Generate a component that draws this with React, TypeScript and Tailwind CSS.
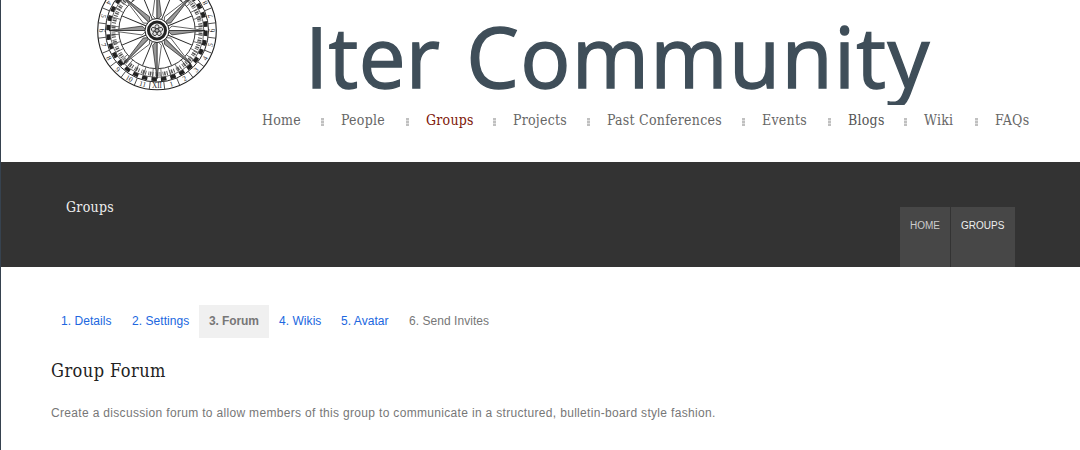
const SLAB = "font-['Roboto_Slab','DejaVu_Serif_Condensed','DejaVu_Serif',serif] [font-stretch:condensed]";

const NAV = [
  { label: 'Home', box: 'w-[79px]', color: 'text-[#666]' },
  { label: 'People', box: 'w-[85px]', color: 'text-[#666]' },
  { label: 'Groups', box: 'w-[87px]', color: 'text-[#7d1507]' },
  { label: 'Projects', box: 'w-[94px]', color: 'text-[#666]' },
  { label: 'Past Conferences', box: 'w-[155px]', color: 'text-[#666]' },
  { label: 'Events', box: 'w-[86px]', color: 'text-[#666]' },
  { label: 'Blogs', box: 'w-[76px]', color: 'text-[#555]' },
  { label: 'Wiki', box: 'w-[71px]', color: 'text-[#666]' },
  { label: 'FAQs', box: 'w-[60px]', color: 'text-[#666]' },
];

const STEPS = [
  { label: '1. Details', box: 'w-[71px] text-[#2067e0]' },
  { label: '2. Settings', box: 'w-[77px] text-[#2067e0]' },
  { label: '3. Forum', box: 'w-[70px] bg-[#f0f0f0] font-bold text-[#777] tracking-[-0.1px]' },
  { label: '4. Wikis', box: 'w-[62px] text-[#2067e0]' },
  { label: '5. Avatar', box: 'w-[68px] text-[#2067e0]' },
  { label: '6. Send Invites', box: 'w-[110px] text-[#777]' },
];

const range = (n: number) => Array.from({ length: n }, (_, i) => i);

function Ray({ angle }: { angle: number }) {
  return (
    <g transform={`rotate(${angle})`} strokeLinejoin="round">
      <path d="M0 48L4.4 15L0 10Z" fill="#fff" stroke="#222" strokeWidth=".7" />
      <path d="M0 48L-4.4 15L0 10Z" fill="#999" stroke="#222" strokeWidth=".7" />
    </g>
  );
}

function Compass() {
  const hours = ['XII', '11', '10', '9', '8', '7', '6', '5', '4', '3', '2', '1'];
  return (
    <svg width="124" height="92" viewBox="-62 -30.5 124 92" className="block">
      <g fill="none" stroke="#222">
        <circle r="59.3" strokeWidth="1.1" />
        <circle r="51.5" strokeWidth="1" />
        <circle r="48.8" strokeWidth="3.8" strokeDasharray="5.5 4.08" />
        <circle r="46.8" strokeWidth=".7" />
        <circle r="38.2" strokeWidth=".9" />
        <circle r="43.6" strokeWidth="4" strokeDasharray="1 1.1 1.5 .7 .8 2.1" stroke="#555" />
      </g>
      {range(24).map((i) => (
        <g key={i} transform={`rotate(${i * 15})`}>
          <path d="M0 51.5V59" stroke="#333" strokeWidth=".8" transform="rotate(7.5)" />
          {(i < 9 || i > 15) && (
            <text y="57.8" textAnchor="middle" fontSize="7.2" fill="#222" className="font-['Liberation_Serif',serif]">
              {hours[i % 12]}
            </text>
          )}
        </g>
      ))}
      {range(32).map((i) => (
        <path key={i} d="M0 38V46.8" stroke="#444" strokeWidth=".7" transform={`rotate(${i * 11.25 + 5.6})`} />
      ))}
      {range(8).map((i) => (
        <path key={i} d="M0 11V38" stroke="#222" strokeWidth=".9" transform={`rotate(${i * 45 + 22.5})`} />
      ))}
      {range(8).map((i) => (
        <Ray key={i} angle={i * 45} />
      ))}
      <circle r="12" fill="#fff" stroke="#222" strokeWidth="1" />
      <circle r="8.5" fill="#eee" stroke="#222" strokeWidth="3" />
      {range(5).map((i) => (
        <circle key={i} cy="-3.8" r="2" fill="#ddd" stroke="#222" strokeWidth=".8" transform={`rotate(${i * 72})`} />
      ))}
      <circle r="1.8" fill="#bbb" stroke="#222" strokeWidth=".8" />
    </svg>
  );
}

function Dots() {
  return (
    <svg width="3" height="8" className="mt-[13px] mr-[17px] -ml-px shrink-0">
      <path d="M0 0h3v2H0zM0 3h3v2H0zM0 6h3v2H0z" fill="#c0c0c0" />
      <path d="M0 2h3v1H0zM0 5h3v1H0z" fill="#dedede" />
    </svg>
  );
}

export default function App() {
  return (
    <div className="h-[450px] w-[1080px] overflow-hidden border-l border-[#36424f] bg-white font-['Liberation_Sans',Arial,sans-serif]">
      <header className="h-[162px]">
        <div className="flex h-[105px] overflow-hidden">
          <div className="ml-[94px] w-[124px]">
            <Compass />
          </div>
          <h1 className="ml-[86px] flex h-[105px] gap-[26px] overflow-hidden font-['Open_Sans',sans-serif] text-[83.5px] leading-[112px] tracking-[1.3px] whitespace-nowrap text-[#3f4e59] [-webkit-text-stroke:1.4px_#3f4e59]">
            <span className="tracking-[0.3px]">Iter</span>
            <span>Community</span>
          </h1>
        </div>
        <nav className={`flex pl-[261px] text-[14px] leading-[30px] tracking-[0.25px] ${SLAB}`}>
          {NAV.map((item, i) => (
            <div key={item.label} className={`flex h-[30px] shrink-0 justify-between whitespace-nowrap ${item.box} ${item.color}`}>
              <a>{item.label}</a>
              {i < NAV.length - 1 && <Dots />}
            </div>
          ))}
        </nav>
      </header>

      <section className="flex h-[105px] justify-between bg-[#333] pr-[65px] pl-[65px]">
        <h2 className={`pt-[35px] text-[14px] leading-5 tracking-[0.3px] text-[#eee] ${SLAB}`}>Groups</h2>
        <div className="mt-[45px] flex gap-px text-[10px] leading-[37px]">
          <a className="w-[50px] bg-[#474747] pl-[10px] text-[#ccc]">HOME</a>
          <a className="w-[64px] bg-[#474747] pl-[10px] text-[#eee]">GROUPS</a>
        </div>
      </section>

      <main className="pt-[38px] pl-[50px]">
        <ul className="flex text-[12px] leading-[33px] tracking-[0.05px]">
          {STEPS.map((step) => (
            <li key={step.label} className={`h-[33px] pl-[10px] whitespace-nowrap ${step.box}`}>
              {step.label}
            </li>
          ))}
        </ul>
        <h3 className={`mt-[20px] text-[18px] leading-[26px] tracking-[0.45px] text-[#222] ${SLAB}`}>Group Forum</h3>
        <p className="mt-[19px] text-[12px] leading-5 tracking-[0.325px] text-[#777]">
          Create a discussion forum to allow members of this group to communicate in a structured, bulletin-board style fashion.
        </p>
      </main>
    </div>
  );
}
